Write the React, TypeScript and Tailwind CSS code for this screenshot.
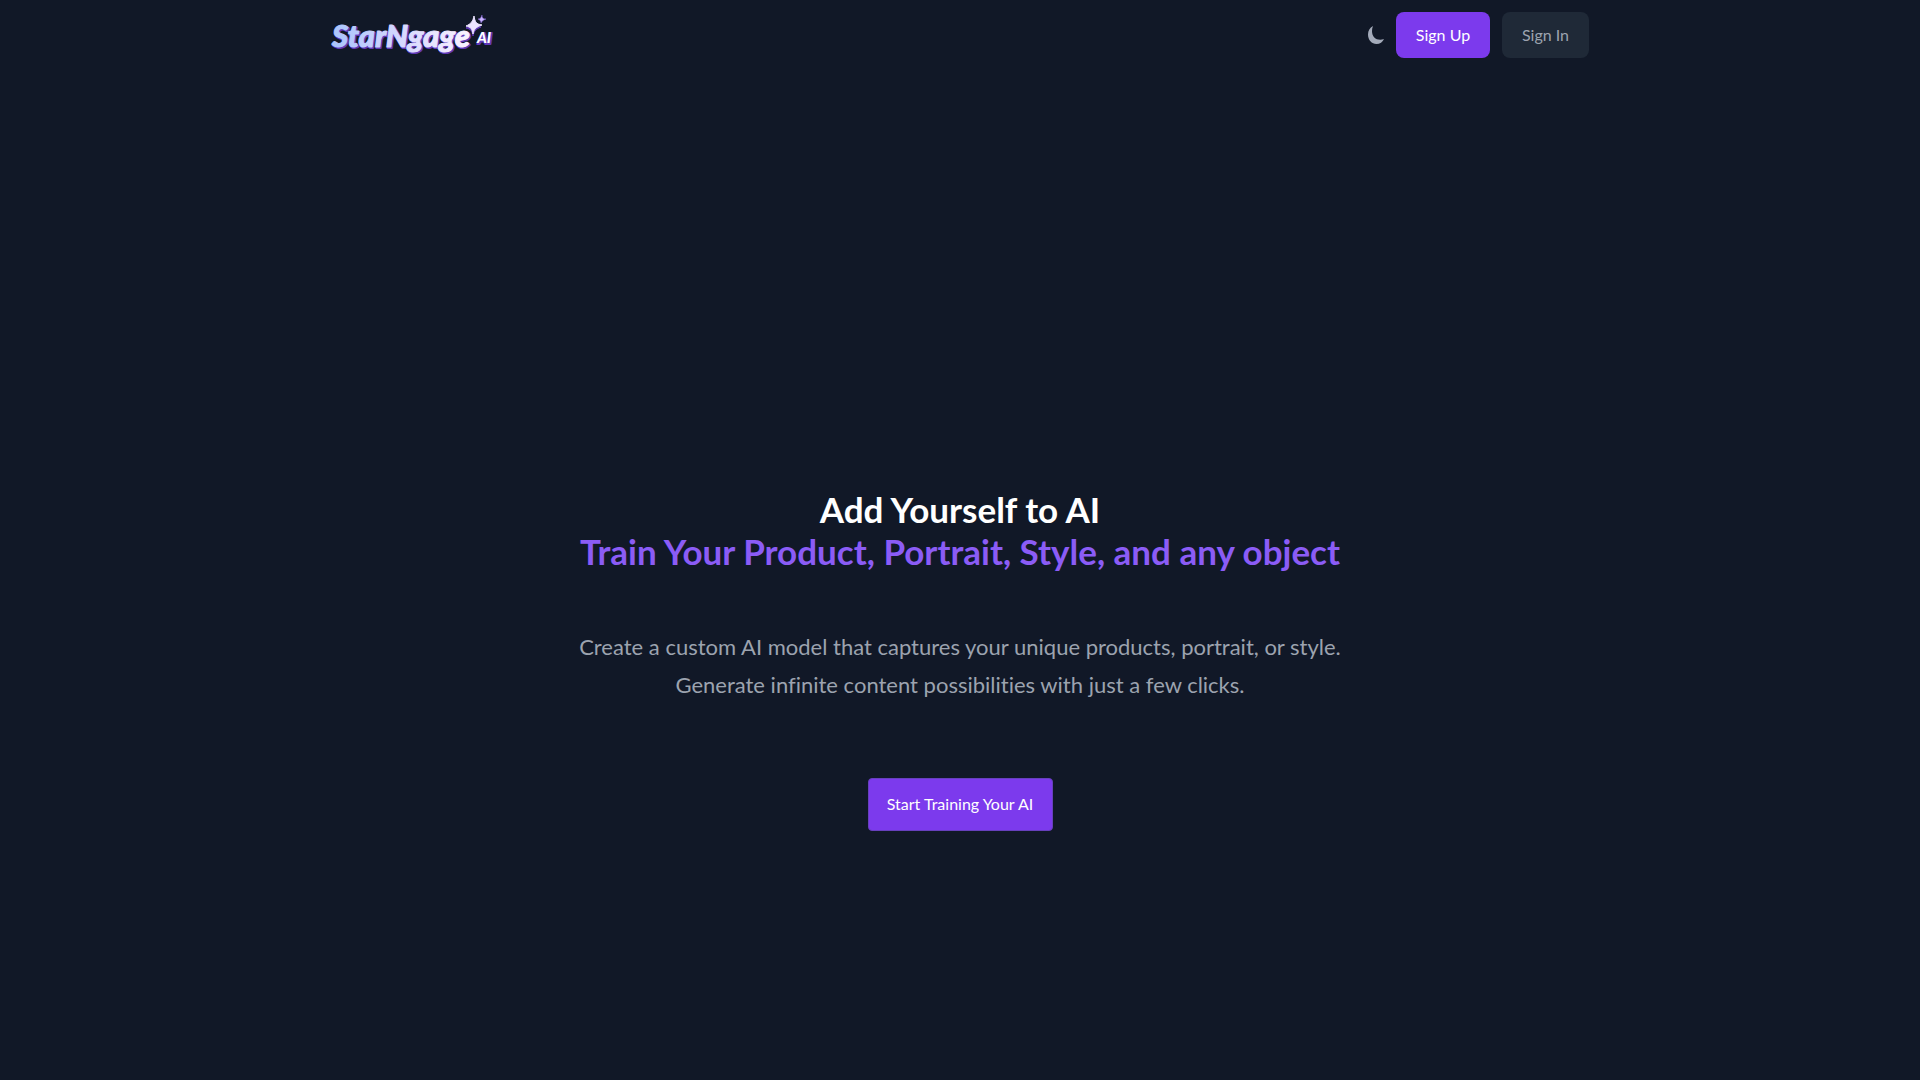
function Logo() {
  return (
    <svg viewBox="0 0 166 46" className="h-[46px] w-[166px]" role="img" aria-label="StarNgage AI">
      <defs>
        <linearGradient id="logo-fill" x1="0" y1="0" x2="140" y2="0" gradientUnits="userSpaceOnUse">
          <stop offset="0" stopColor="#a9c4fb" />
          <stop offset="0.5" stopColor="#d6d8fd" />
          <stop offset="1" stopColor="#fbf3ff" />
        </linearGradient>
      </defs>
      <g fontFamily="Lato, sans-serif" fontWeight="900" fontStyle="italic" strokeLinejoin="round">
        <g fill="#6039b8" stroke="#6039b8" strokeWidth="2">
          <text x="2" y="36" fontSize="31">StarNgage</text>
          <text x="147" y="32" fontSize="15">AI</text>
          <path d="M143 6c1 5 2 8 7 9-5 2-7 4-8 9-1-5-2-7-7-8 5-2 7-5 8-10Z" strokeWidth="1" />
        </g>
        <text x="1" y="35" fontSize="31" fill="url(#logo-fill)" stroke="url(#logo-fill)" strokeWidth="1">
          StarNgage
        </text>
        <text x="146" y="31" fontSize="15" fill="#fff">AI</text>
      </g>
      <path
        d="M143 4c1 6 2 8 8 9-6 2-8 4-9 9-1-5-2-7-7-8 5-2 7-5 8-10Z"
        fill="#ece4ff"
        stroke="#ece4ff"
        strokeWidth="1"
        strokeLinejoin="round"
      />
      <path d="M151 3c0 3 1 4 4 4-3 1-4 2-5 4 0-2-1-3-3-4 2 0 3-1 4-4Z" fill="#c9b5ff" stroke="#8a68dd" strokeWidth="0.5" />
    </svg>
  );
}

function MoonIcon() {
  return (
    <svg viewBox="0 0 16 18" className="h-[18px] w-4" fill="#a4abba" aria-hidden="true">
      <path d="M5 0C1.800 1.600 0 4.800 0 8.500 0 13.900 3.700 18 8.500 18c3.400 0 6.200-1.900 7.500-5-1.300.6-2.500.8-3.800.8C7.500 13.800 4 10.300 4 5.300 4 3.300 4.300 1.600 5 0Z" />
    </svg>
  );
}

export default function App() {
  return (
    <div className="flex min-h-screen flex-col bg-[#111827] font-['Lato',sans-serif] [font-variant-ligatures:none]">
      <header className="mx-auto flex h-[70px] w-full max-w-[1258px] items-center justify-between">
        <a href="#home">
          <Logo />
        </a>
        <div className="flex items-center">
          <button type="button" aria-label="Toggle dark mode" className="mr-3">
            <MoonIcon />
          </button>
          <button type="button" className="mr-3 h-[46px] w-[94px] rounded-lg bg-[#7c3aed] text-[16px] text-white">
            Sign Up
          </button>
          <button type="button" className="h-[46px] w-[87px] rounded-lg bg-[#1f2937] text-[16px] text-[#9ca3af]">
            Sign In
          </button>
        </div>
      </header>
      <main className="flex flex-1 flex-col items-center justify-center pt-[168px] text-center">
        <h1 className="text-[35px] leading-[42px] font-bold text-white">
          Add Yourself to AI
          <span className="block text-[#8b5cf6]">Train Your Product, Portrait, Style, and any object</span>
        </h1>
        <p className="mt-[56px] text-[22px] leading-[38px] text-[#9ca3af]">
          Create a custom AI model that captures your unique products, portrait, or style.
          <br />
          Generate infinite content possibilities with just a few clicks.
        </p>
        <button type="button" className="mt-[74px] h-[53px] w-[185px] rounded-sm border border-[#6740bd] bg-[#7c3aed] text-[16px] text-white">
          Start Training Your AI
        </button>
      </main>
    </div>
  );
}
